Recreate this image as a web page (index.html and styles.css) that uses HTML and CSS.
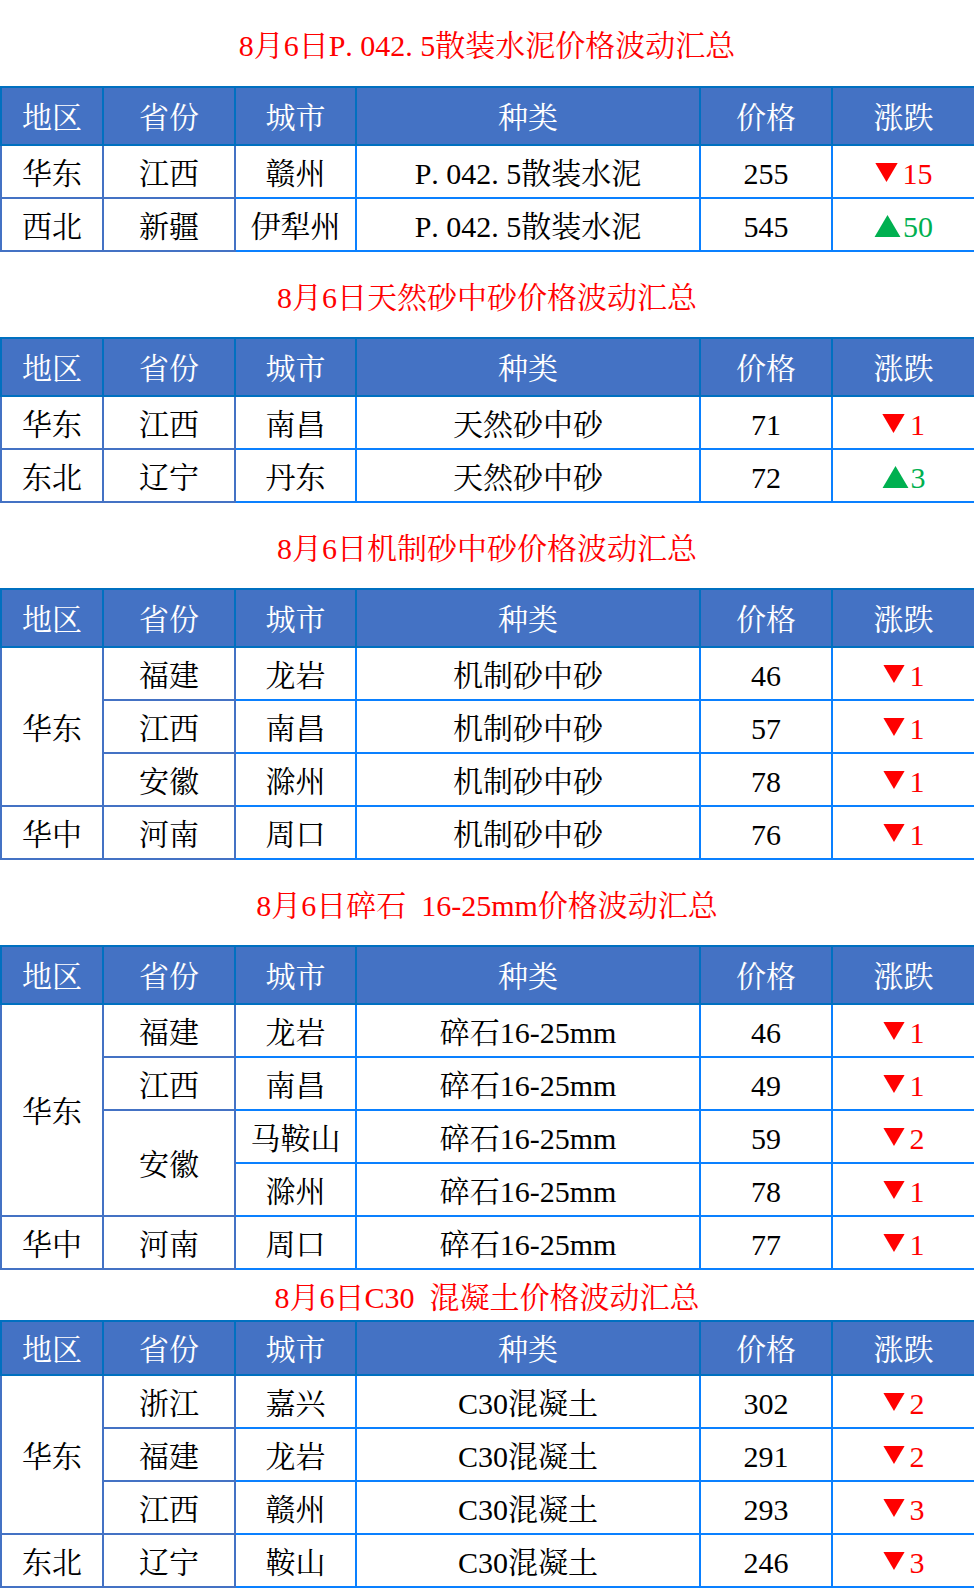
FILE: index.html
```html
<!DOCTYPE html>
<html lang="zh-CN">
<head>
<meta charset="utf-8">
<title>价格波动汇总</title>
<link rel="stylesheet" href="styles.css">
</head>
<body>
<div class="page">

  <div class="title t-first">8月6日P<span class="dot">.</span>042<span class="dot">.</span>5散装水泥价格波动汇总</div>
  <table class="grid big">
    <colgroup><col class="c1"><col class="c2"><col class="c3"><col class="c4"><col class="c5"><col class="c6"></colgroup>
    <tr class="head"><th>地区</th><th>省份</th><th>城市</th><th>种类</th><th>价格</th><th>涨跌</th></tr>
    <tr><td class="l">华东</td><td class="l">江西</td><td>赣州</td><td>P<span class="dot">.</span>042<span class="dot">.</span>5散装水泥</td><td>255</td><td><span class="down"><svg class="tri" viewBox="0 0 20 17"><polygon points="0,0 20,0 10,17"/></svg>15</span></td></tr>
    <tr><td class="l">西北</td><td class="l">新疆</td><td>伊犁州</td><td>P<span class="dot">.</span>042<span class="dot">.</span>5散装水泥</td><td>545</td><td><span class="up"><svg class="tri" viewBox="0 0 20 17"><polygon points="10,0 20,17 0,17"/></svg>50</span></td></tr>
  </table>

  <div class="title">8月6日天然砂中砂价格波动汇总</div>
  <table class="grid big">
    <colgroup><col class="c1"><col class="c2"><col class="c3"><col class="c4"><col class="c5"><col class="c6"></colgroup>
    <tr class="head"><th>地区</th><th>省份</th><th>城市</th><th>种类</th><th>价格</th><th>涨跌</th></tr>
    <tr><td class="l">华东</td><td class="l">江西</td><td>南昌</td><td>天然砂中砂</td><td>71</td><td><span class="down"><svg class="tri" viewBox="0 0 20 17"><polygon points="0,0 20,0 10,17"/></svg>1</span></td></tr>
    <tr><td class="l">东北</td><td class="l">辽宁</td><td>丹东</td><td>天然砂中砂</td><td>72</td><td><span class="up"><svg class="tri" viewBox="0 0 20 17"><polygon points="10,0 20,17 0,17"/></svg>3</span></td></tr>
  </table>

  <div class="title">8月6日机制砂中砂价格波动汇总</div>
  <table class="grid">
    <colgroup><col class="c1"><col class="c2"><col class="c3"><col class="c4"><col class="c5"><col class="c6"></colgroup>
    <tr class="head"><th>地区</th><th>省份</th><th>城市</th><th>种类</th><th>价格</th><th>涨跌</th></tr>
    <tr><td class="l" rowspan="3">华东</td><td class="l">福建</td><td>龙岩</td><td>机制砂中砂</td><td>46</td><td><span class="down"><svg class="tri" viewBox="0 0 20 17"><polygon points="0,0 20,0 10,17"/></svg>1</span></td></tr>
    <tr><td class="l">江西</td><td>南昌</td><td>机制砂中砂</td><td>57</td><td><span class="down"><svg class="tri" viewBox="0 0 20 17"><polygon points="0,0 20,0 10,17"/></svg>1</span></td></tr>
    <tr><td class="l">安徽</td><td>滁州</td><td>机制砂中砂</td><td>78</td><td><span class="down"><svg class="tri" viewBox="0 0 20 17"><polygon points="0,0 20,0 10,17"/></svg>1</span></td></tr>
    <tr><td class="l">华中</td><td class="l">河南</td><td>周口</td><td>机制砂中砂</td><td>76</td><td><span class="down"><svg class="tri" viewBox="0 0 20 17"><polygon points="0,0 20,0 10,17"/></svg>1</span></td></tr>
  </table>

  <div class="title">8月6日碎石&ensp;16-25mm价格波动汇总</div>
  <table class="grid">
    <colgroup><col class="c1"><col class="c2"><col class="c3"><col class="c4"><col class="c5"><col class="c6"></colgroup>
    <tr class="head"><th>地区</th><th>省份</th><th>城市</th><th>种类</th><th>价格</th><th>涨跌</th></tr>
    <tr><td class="l" rowspan="4">华东</td><td class="l">福建</td><td>龙岩</td><td>碎石16-25mm</td><td>46</td><td><span class="down"><svg class="tri" viewBox="0 0 20 17"><polygon points="0,0 20,0 10,17"/></svg>1</span></td></tr>
    <tr><td class="l">江西</td><td>南昌</td><td>碎石16-25mm</td><td>49</td><td><span class="down"><svg class="tri" viewBox="0 0 20 17"><polygon points="0,0 20,0 10,17"/></svg>1</span></td></tr>
    <tr><td class="l" rowspan="2">安徽</td><td>马鞍山</td><td>碎石16-25mm</td><td>59</td><td><span class="down"><svg class="tri" viewBox="0 0 20 17"><polygon points="0,0 20,0 10,17"/></svg>2</span></td></tr>
    <tr><td>滁州</td><td>碎石16-25mm</td><td>78</td><td><span class="down"><svg class="tri" viewBox="0 0 20 17"><polygon points="0,0 20,0 10,17"/></svg>1</span></td></tr>
    <tr><td class="l">华中</td><td class="l">河南</td><td>周口</td><td>碎石16-25mm</td><td>77</td><td><span class="down"><svg class="tri" viewBox="0 0 20 17"><polygon points="0,0 20,0 10,17"/></svg>1</span></td></tr>
  </table>

  <div class="title t-short">8月6日C30&ensp;混凝土价格波动汇总</div>
  <table class="grid">
    <colgroup><col class="c1"><col class="c2"><col class="c3"><col class="c4"><col class="c5"><col class="c6"></colgroup>
    <tr class="head short"><th>地区</th><th>省份</th><th>城市</th><th>种类</th><th>价格</th><th>涨跌</th></tr>
    <tr><td class="l" rowspan="3">华东</td><td class="l">浙江</td><td>嘉兴</td><td>C30混凝土</td><td>302</td><td><span class="down"><svg class="tri" viewBox="0 0 20 17"><polygon points="0,0 20,0 10,17"/></svg>2</span></td></tr>
    <tr><td class="l">福建</td><td>龙岩</td><td>C30混凝土</td><td>291</td><td><span class="down"><svg class="tri" viewBox="0 0 20 17"><polygon points="0,0 20,0 10,17"/></svg>2</span></td></tr>
    <tr><td class="l">江西</td><td>赣州</td><td>C30混凝土</td><td>293</td><td><span class="down"><svg class="tri" viewBox="0 0 20 17"><polygon points="0,0 20,0 10,17"/></svg>3</span></td></tr>
    <tr><td class="l">东北</td><td class="l">辽宁</td><td>鞍山</td><td>C30混凝土</td><td>246</td><td><span class="down"><svg class="tri" viewBox="0 0 20 17"><polygon points="0,0 20,0 10,17"/></svg>3</span></td></tr>
  </table>

</div>
</body>
</html>
```

FILE: styles.css
```css
html, body {
  margin: 0;
  padding: 0;
  background: #ffffff;
}

.page {
  width: 974px;
  font-family: "Liberation Serif", "Noto Serif CJK SC", "Noto Sans CJK SC", serif;
  font-size: 30px;
  color: #000;
}

.title {
  height: 85px;
  display: flex;
  align-items: center;
  justify-content: center;
  padding-top: 6px;
  box-sizing: border-box;
  color: #ff0000;
  font-size: 30px;
  line-height: 1;
  white-space: nowrap;
}

.title.t-first {
  height: 86px;
}

.title.t-short {
  height: 50px;
}

.dot {
  display: inline-block;
  width: 0.5em;
  text-align: left;
}

.grid {
  width: 974px;
  border-collapse: collapse;
  table-layout: fixed;
}

.c1 { width: 102px; }
.c2 { width: 132px; }
.c3 { width: 121px; }
.c4 { width: 344px; }
.c5 { width: 132px; }
.c6 { width: 143px; }

.grid th,
.grid td {
  padding: 4px 0 0 0;
  text-align: center;
  vertical-align: middle;
  line-height: 1;
  white-space: nowrap;
}

.grid tr {
  height: 53px;
}

.grid tr.head {
  height: 58px;
}

.grid tr.head.short {
  height: 54px;
}

.grid th {
  background: #4472c4;
  color: #ffffff;
  font-weight: normal;
  border: 2px solid #0070c0;
}

.grid td {
  border: 2px solid #0a80ff;
}

.grid td.l {
  border-color: #4472c4;
}

.down { color: #ff0000; }
.up { color: #00b050; }

.tri {
  display: inline-block;
  width: 22px;
  height: 18px;
  vertical-align: 3px;
  margin-right: 5px;
}

.big .down .tri {
  width: 23px;
  height: 19px;
  vertical-align: 2px;
  margin-right: 5px;
}

.big .up .tri {
  width: 27px;
  height: 22px;
  vertical-align: 0;
  margin-right: 2px;
}

.down .tri { fill: #ff0000; }
.up .tri { fill: #00b050; }
```
